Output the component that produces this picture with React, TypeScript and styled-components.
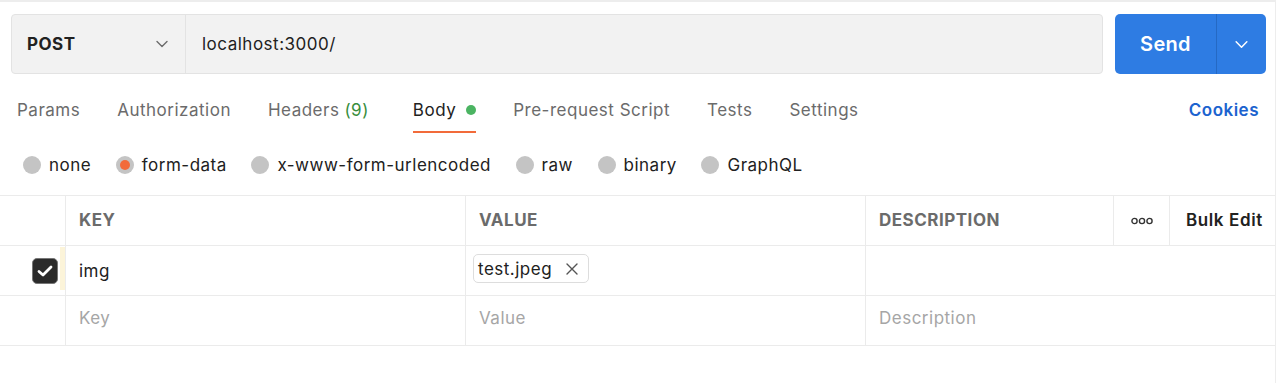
import React from "react";
import styled, { createGlobalStyle } from "styled-components";

const Global = createGlobalStyle`
  html, body { margin: 0; padding: 0; background: #ffffff; }
  body { font-family: Inter, "Noto Sans", sans-serif; color: #212121; -webkit-font-smoothing: antialiased; letter-spacing: 0.5px; }
  * { box-sizing: border-box; }
`;

const Frame = styled.div`
  width: 1276px;
  height: 383px;
  border-top: 2px solid #ededed;
  border-right: 1px solid #ededed;
  display: flex;
  flex-direction: column;
`;

const TopBar = styled.div`
  display: flex;
  gap: 12px;
  padding: 12px 9px 0 11px;
`;

const UrlBox = styled.div`
  flex: 1;
  height: 60px;
  display: flex;
  background: #f2f2f2;
  border: 1px solid #e3e3e3;
  border-radius: 4px;
`;

const Method = styled.div`
  width: 174px;
  display: flex;
  align-items: center;
  justify-content: space-between;
  padding: 0 16px 0 15px;
  border-right: 1px solid #e3e3e3;
  font-size: 17px;
  font-weight: 700;
  color: #212121;
`;

const UrlText = styled.div`
  display: flex;
  align-items: center;
  padding-left: 16px;
  font-size: 17px;
  color: #212121;
`;

const SendGroup = styled.div`
  width: 151px;
  height: 60px;
  display: flex;
  background: #2e7ce3;
  border-radius: 5px;
  color: #ffffff;
`;

const SendMain = styled.div`
  flex: 1;
  display: flex;
  align-items: center;
  justify-content: center;
  font-size: 20px;
  font-weight: 600;
  letter-spacing: 0.3px;
  border-right: 1px solid #2569c4;
`;

const SendArrow = styled.div`
  width: 49px;
  display: flex;
  align-items: center;
  justify-content: center;
`;

const Tabs = styled.div`
  display: flex;
  align-items: stretch;
  padding: 0 16px 0 17px;
  margin-top: 11px;
  height: 48px;
`;

const Tab = styled.div<{ $active?: boolean; $extra?: number }>`
  display: flex;
  align-items: center;
  gap: 10px;
  margin-right: ${(p) => 37 + (p.$extra ?? 0)}px;
  padding-top: 4px;
  font-size: 17px;
  color: ${(p) => (p.$active ? "#212121" : "#6b6b6b")};
  border-bottom: 2px solid ${(p) => (p.$active ? "#f26b3a" : "transparent")};
`;

const Count = styled.span`
  color: #388e3c;
  margin-left: 5px;
`;

const Dot = styled.span`
  width: 10px;
  height: 10px;
  border-radius: 50%;
  background: #4bb462;
`;

const Spacer = styled.div`
  flex: 1;
`;

const Cookies = styled.div`
  display: flex;
  align-items: center;
  padding-top: 2px;
  font-size: 17px;
  font-weight: 600;
  color: #1c63cf;
`;

const Radios = styled.div`
  display: flex;
  align-items: center;
  gap: 24.6px;
  padding: 2px 0 0 23px;
  height: 62px;
`;

const RadioItem = styled.label`
  display: flex;
  align-items: center;
  gap: 8px;
  font-size: 17px;
  color: #212121;
`;

const Circle = styled.span<{ $on?: boolean }>`
  width: 18px;
  height: 18px;
  border-radius: 50%;
  background: #c4c4c4;
  display: flex;
  align-items: center;
  justify-content: center;
  &::after {
    content: "";
    width: 10px;
    height: 10px;
    border-radius: 50%;
    background: ${(p) => (p.$on ? "#f26b3a" : "transparent")};
  }
`;

const Table = styled.div`
  border-top: 1px solid #ebebeb;
  display: flex;
  flex-direction: column;
`;

const Row = styled.div`
  display: grid;
  grid-template-columns: 66px 400px 400px 1fr;
  height: 50px;
  border-bottom: 1px solid #ebebeb;
`;

const HeadRow = styled(Row)`
  grid-template-columns: 66px 400px 400px 248px 56px 1fr;
`;

const Cell = styled.div<{ $center?: boolean }>`
  display: flex;
  align-items: center;
  justify-content: ${(p) => (p.$center ? "center" : "flex-start")};
  padding-left: ${(p) => (p.$center ? "0" : "13px")};
  border-right: 1px solid #ebebeb;
  font-size: 17px;
  &:last-child { border-right: none; }
`;

const HeadCell = styled(Cell)`
  font-weight: 700;
  color: #6b6b6b;
  padding-bottom: 2px;
`;

const BulkCell = styled(Cell)`
  font-weight: 600;
  color: #212121;
  padding-left: 16px;
  padding-bottom: 2px;
  letter-spacing: 0.6px;
`;

const CheckCell = styled.div`
  display: flex;
  align-items: center;
  justify-content: flex-end;
  border-right: 1px solid #ebebeb;
`;

const Check = styled.span`
  width: 26px;
  height: 26px;
  border-radius: 5px;
  background: #2b2b2b;
  border: 1px solid #777;
  display: flex;
  align-items: center;
  justify-content: center;
  margin-right: 2px;
`;

const Strip = styled.span`
  align-self: stretch;
  width: 5px;
  margin: 1px 0 5px;
  background: #fcf4d9;
`;

const TextCell = styled(Cell)<{ $muted?: boolean }>`
  color: ${(p) => (p.$muted ? "#a6a6a6" : "#212121")};
  padding-bottom: ${(p) => (p.$muted ? "6px" : "0")};
`;

const Chip = styled.span`
  display: flex;
  align-items: center;
  gap: 14px;
  height: 29px;
  padding: 0 10px 0 4px;
  margin-left: -6px;
  margin-top: -4px;
  border: 1px solid #dddddd;
  border-radius: 5px;
  font-size: 17px;
  color: #212121;
`;

const Chevron = ({ color, size = 14 }: { color: string; size?: number }) => (
  <svg width={size} height={size} viewBox="0 0 14 14" fill="none">
    <path d="M2 4.5 L7 9.5 L12 4.5" stroke={color} strokeWidth="1.4" strokeLinecap="round" strokeLinejoin="round" />
  </svg>
);

const tabs = ["Params", "Authorization"];
const tabsAfter = ["Pre-request Script", "Tests", "Settings"];
const radios = ["none", "form-data", "x-www-form-urlencoded", "raw", "binary", "GraphQL"];

export default function App() {
  return (
    <>
      <Global />
      <Frame>
        <TopBar>
          <UrlBox>
            <Method>
              POST
              <Chevron color="#6b6b6b" />
            </Method>
            <UrlText>localhost:3000/</UrlText>
          </UrlBox>
          <SendGroup>
            <SendMain>Send</SendMain>
            <SendArrow>
              <Chevron color="#ffffff" size={15} />
            </SendArrow>
          </SendGroup>
        </TopBar>

        <Tabs>
          {tabs.map((t) => (
            <Tab key={t}>{t}</Tab>
          ))}
          <Tab $extra={7}>
            <span>
              Headers<Count>(9)</Count>
            </span>
          </Tab>
          <Tab $active>
            Body
            <Dot />
          </Tab>
          {tabsAfter.map((t) => (
            <Tab key={t}>{t}</Tab>
          ))}
          <Spacer />
          <Cookies>Cookies</Cookies>
        </Tabs>

        <Radios>
          {radios.map((r) => (
            <RadioItem key={r}>
              <Circle $on={r === "form-data"} />
              {r}
            </RadioItem>
          ))}
        </Radios>

        <Table>
          <HeadRow>
            <Cell />
            <HeadCell>KEY</HeadCell>
            <HeadCell>VALUE</HeadCell>
            <HeadCell>DESCRIPTION</HeadCell>
            <Cell $center>
              <svg width="22" height="8" viewBox="0 0 22 8" fill="none">
                <circle cx="3.5" cy="4" r="2.6" stroke="#333" strokeWidth="1.4" />
                <circle cx="11" cy="4" r="2.6" stroke="#333" strokeWidth="1.4" />
                <circle cx="18.5" cy="4" r="2.6" stroke="#333" strokeWidth="1.4" />
              </svg>
            </Cell>
            <BulkCell>Bulk Edit</BulkCell>
          </HeadRow>
          <Row>
            <CheckCell>
              <Check>
                <svg width="16" height="14" viewBox="0 0 16 14" fill="none">
                  <path d="M2 7.5 L6 11 L14 3" stroke="#ffffff" strokeWidth="2.8" strokeLinecap="round" strokeLinejoin="round" />
                </svg>
              </Check>
              <Strip />
            </CheckCell>
            <TextCell>img</TextCell>
            <TextCell>
              <Chip>
                test.jpeg
                <svg width="12" height="12" viewBox="0 0 12 12" fill="none">
                  <path d="M1 1 L11 11 M11 1 L1 11" stroke="#555" strokeWidth="1.4" strokeLinecap="round" />
                </svg>
              </Chip>
            </TextCell>
            <TextCell />
          </Row>
          <Row>
            <CheckCell />
            <TextCell $muted>Key</TextCell>
            <TextCell $muted>Value</TextCell>
            <TextCell $muted>Description</TextCell>
          </Row>
        </Table>
      </Frame>
    </>
  );
}
